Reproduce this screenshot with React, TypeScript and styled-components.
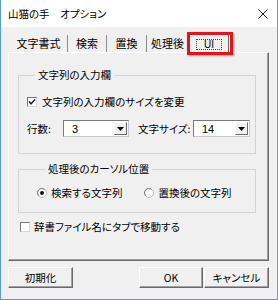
import styled, { createGlobalStyle } from 'styled-components';

const GlobalStyle = createGlobalStyle`
  html, body {
    margin: 0;
    padding: 0;
    background: #ffffff;
  }
  body {
    font-family: "Noto Sans CJK JP", "Liberation Sans", sans-serif;
    font-size: 10.5px;
    font-feature-settings: "palt";
    color: #000;
  }
  * {
    box-sizing: border-box;
  }
`;

const Window = styled.div`
  width: 278px;
  height: 300px;
  display: flex;
  flex-direction: column;
  background: #f0f0f0;
  border: 1px solid #5d9ddb;
  border-top: none;
`;

const TitleBar = styled.div`
  height: 27px;
  flex: none;
  background: #ffffff;
  display: flex;
  align-items: center;
  justify-content: space-between;
  padding: 0 9px 0 7px;
  line-height: 14px;
`;

const Body = styled.div`
  display: flex;
  flex-direction: column;
  padding: 5px 8px 0 7px;
`;

const TabStrip = styled.div`
  position: relative;
  height: 20px;
  display: flex;
  align-items: flex-end;
  padding-left: 2px;
  font-size: 11px;
`;

const Tab = styled.div<{ $w: number }>`
  width: ${(p) => p.$w}px;
  height: 17px;
  line-height: 17px;
  text-align: center;
  border-right: 1px solid #8c8c8c;
  white-space: nowrap;
  overflow: hidden;
`;

const ActiveTab = styled.div`
  width: 40px;
  height: 20px;
  margin-bottom: -1px;
  z-index: 1;
  background: #f0f0f0;
  border-top: 1px solid #ffffff;
  border-left: 1px solid #ffffff;
  border-right: 1px solid #696969;
  display: flex;
  justify-content: center;
  padding-top: 5px;
`;

const FocusRect = styled.div`
  width: 26px;
  height: 11px;
  border: 1px dotted #404040;
  font-family: "Liberation Sans", sans-serif;
  font-size: 10px;
  line-height: 9px;
  text-align: center;
`;

const Highlight = styled.div`
  position: absolute;
  left: 179px;
  top: 0;
  width: 46px;
  height: 23px;
  border: 3px solid #e3141c;
  box-shadow: 1px 1px 2px rgba(0, 0, 0, 0.35);
  z-index: 2;
`;

const Panel = styled.div`
  height: 209px;
  display: flex;
  flex-direction: column;
  padding: 15px 0 0 9px;
  border-top: 1px solid #ffffff;
  border-left: 1px solid #ffffff;
  border-right: 1px solid #696969;
  border-bottom: 1px solid #696969;
  box-shadow: inset -1px -1px #a0a0a0;
`;

const Group = styled.fieldset<{ $pad: string; $mt?: number }>`
  width: 238px;
  margin: ${(p) => p.$mt ?? 0}px 0 0 0;
  padding: ${(p) => p.$pad};
  border: 1px solid #d3d3d3;
  min-inline-size: 0;
`;

const Legend = styled.legend`
  margin-left: 8px;
  padding: 0 3px;
  line-height: 14px;
  height: 14px;
`;

const Row = styled.div<{ $mt?: number; $gap?: number }>`
  display: flex;
  align-items: center;
  height: 14px;
  line-height: 14px;
  margin-top: ${(p) => p.$mt ?? 0}px;
  gap: ${(p) => p.$gap ?? 0}px;
  white-space: nowrap;
`;

const SelectRow = styled.div`
  display: flex;
  align-items: center;
  height: 17px;
  margin-top: 11px;
  white-space: nowrap;
`;

const FieldLabel = styled.span<{ $w?: number; $ml?: number }>`
  ${(p) => (p.$w ? `width: ${p.$w}px;` : 'flex: 1;')}
  margin-left: ${(p) => p.$ml ?? 0}px;
  line-height: 14px;
`;

const SelectBox = styled.div<{ $w: number }>`
  width: ${(p) => p.$w}px;
  flex: none;
  height: 17px;
  background: #ffffff;
  border: 1px solid;
  border-color: #7a7a7a #c8c8c8 #c8c8c8 #7a7a7a;
  display: flex;
  align-items: center;
  justify-content: space-between;
  padding: 0 1px 0 8px;
  font-family: "Liberation Sans", sans-serif;
  font-size: 11px;
`;

const ArrowButton = styled.div`
  width: 13px;
  height: 13px;
  background: #f0f0f0;
  border: 1px solid;
  border-color: #ffffff #6a6a6a #6a6a6a #ffffff;
  display: flex;
  align-items: center;
  justify-content: center;
`;

const Box = styled.div<{ $ml?: number }>`
  width: 10px;
  height: 10px;
  flex: none;
  margin-left: ${(p) => p.$ml ?? 0}px;
  background: #ffffff;
  border: 1px solid;
  border-color: #7a7a7a #d8d8d8 #d8d8d8 #7a7a7a;
  display: flex;
  align-items: center;
  justify-content: center;
`;

const RadioItem = styled.div`
  display: flex;
  align-items: center;
  gap: 4px;
`;

const ButtonRow = styled.div`
  display: flex;
  margin-top: 6px;
  height: 21px;
  gap: 1px;
`;

const Spacer = styled.div`
  flex: 1;
`;

const Button = styled.button<{ $w: number }>`
  width: ${(p) => p.$w}px;
  height: 21px;
  padding: 0;
  background: #f0f0f0;
  border: 1px solid;
  border-color: #ffffff #696969 #696969 #ffffff;
  box-shadow: inset -1px -1px #a0a0a0;
  font-family: inherit;
  font-size: 10.5px;
  font-feature-settings: "palt";
  color: #000;
  line-height: 14px;
`;

function CheckBox({ checked, ml }: { checked?: boolean; ml?: number }) {
  return (
    <Box $ml={ml}>
      {checked && (
        <svg width="8" height="8" viewBox="0 0 8 8">
          <polyline points="1,3.5 3,5.8 7,1.5" fill="none" stroke="#222" strokeWidth="1.5" />
        </svg>
      )}
    </Box>
  );
}

function Radio({ checked }: { checked?: boolean }) {
  return (
    <svg width="10" height="10" viewBox="0 0 10 10">
      <circle cx="5" cy="5" r="4.5" fill="#fff" stroke="#bdbdbd" />
      <path d="M1.8 7.8 A4 4 0 0 1 7.8 1.8" fill="none" stroke="#7a7a7a" />
      {checked && <circle cx="5" cy="5" r="2" fill="#111" />}
    </svg>
  );
}

function Select({ w, value }: { w: number; value: string }) {
  return (
    <SelectBox $w={w}>
      <span>{value}</span>
      <ArrowButton>
        <svg width="7" height="4" viewBox="0 0 7 4">
          <polygon points="0,0 7,0 3.5,4" fill="#000" />
        </svg>
      </ArrowButton>
    </SelectBox>
  );
}

export default function App() {
  return (
    <>
      <GlobalStyle />
      <Window>
        <TitleBar>
          <span>山猫の手　オプション</span>
          <svg width="10" height="10" viewBox="0 0 10 10">
            <path d="M0.5 0.5 L9.5 9.5 M9.5 0.5 L0.5 9.5" stroke="#222" strokeWidth="1" />
          </svg>
        </TitleBar>
        <Body>
          <TabStrip>
            <Tab $w={58}>文字書式</Tab>
            <Tab $w={39}>検索</Tab>
            <Tab $w={40}>置換</Tab>
            <Tab $w={42}>処理後</Tab>
            <ActiveTab>
              <FocusRect>UI</FocusRect>
            </ActiveTab>
            <Highlight />
          </TabStrip>
          <Panel>
            <Group $pad="13px 5px 16px 8px">
              <Legend>文字列の入力欄</Legend>
              <Row $gap={5}>
                <CheckBox checked />
                <span>文字列の入力欄のサイズを変更</span>
              </Row>
              <SelectRow>
                <FieldLabel $w={36}>行数:</FieldLabel>
                <Select w={66} value="3" />
                <FieldLabel $ml={9}>文字サイズ:</FieldLabel>
                <Select w={57} value="14" />
              </SelectRow>
            </Group>
            <Group $pad="10px 8px 12px 18px" $mt={8}>
              <Legend>処理後のカーソル位置</Legend>
              <Row $gap={22}>
                <RadioItem>
                  <Radio checked />
                  <span>検索する文字列</span>
                </RadioItem>
                <RadioItem>
                  <Radio />
                  <span>置換後の文字列</span>
                </RadioItem>
              </Row>
            </Group>
            <Row $mt={7} $gap={4}>
              <CheckBox ml={2} />
              <span>辞書ファイル名にタブで移動する</span>
            </Row>
          </Panel>
          <ButtonRow>
            <Button $w={65}>初期化</Button>
            <Spacer />
            <Button $w={64}>OK</Button>
            <Button $w={65}>キャンセル</Button>
          </ButtonRow>
        </Body>
      </Window>
    </>
  );
}
